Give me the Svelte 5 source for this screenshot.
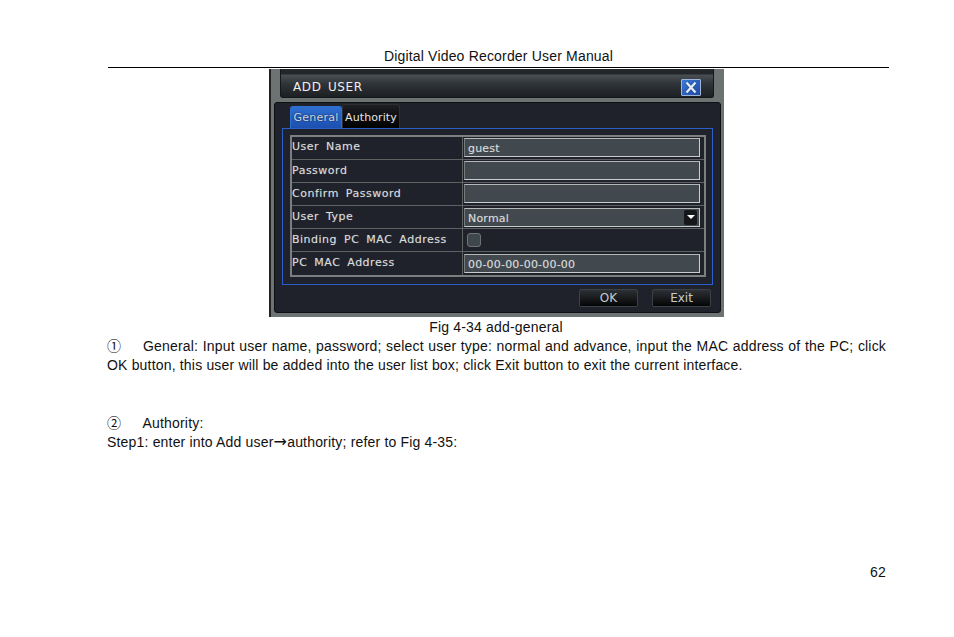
<script>
  const rows = [
    { label: 'User Name', kind: 'text', value: 'guest' },
    { label: 'Password', kind: 'text', value: '' },
    { label: 'Confirm Password', kind: 'text', value: '' },
    { label: 'User Type', kind: 'select', value: 'Normal' },
    { label: 'Binding PC MAC Address', kind: 'check', value: '' },
    { label: 'PC MAC Address', kind: 'text', value: '00-00-00-00-00-00' }
  ];
</script>

<div class="page">
  <header class="head">Digital Video Recorder User Manual</header>

  <figure class="shot">
    <div class="dialog">
      <div class="titlebar">
        <span class="title">ADD USER</span>
        <span class="close">
          <svg viewBox="0 0 18 15" width="18" height="15">
            <path d="M4.5 2.5 L13.5 12.5 M13.5 2.5 L4.5 12.5" stroke="#16387c" stroke-width="4" fill="none" opacity="0.5" />
            <path d="M4.5 2.5 L13.5 12.5 M13.5 2.5 L4.5 12.5" stroke="#e4eaf4" stroke-width="2.4" fill="none" />
          </svg>
        </span>
      </div>
      <div class="panel">
        <div class="tabs">
          <span class="tab active">General</span>
          <span class="tab">Authority</span>
        </div>
        <div class="frame">
          <div class="table">
            {#each rows as row}
              <div class="row">
                <div class="label">{row.label}</div>
                <div class="cell">
                  {#if row.kind === 'check'}
                    <span class="check"></span>
                  {:else}
                    <div class="input">
                      <span>{row.value}</span>
                      {#if row.kind === 'select'}
                        <span class="arrow"></span>
                      {/if}
                    </div>
                  {/if}
                </div>
              </div>
            {/each}
          </div>
        </div>
        <div class="buttons">
          <span class="btn">OK</span>
          <span class="btn">Exit</span>
        </div>
      </div>
    </div>
  </figure>

  <p class="caption">Fig 4-34 add-general</p>

  <p class="para">①&emsp;&ensp;General: Input user name, password; select user type: normal and advance, input the MAC address of the PC; click OK button, this user will be added into the user list box; click Exit button to exit the current interface.</p>

  <p class="para second">②&emsp;&ensp;Authority:</p>
  <p class="para">Step1: enter into Add user<span class="to">→</span>authority; refer to Fig 4-35:</p>

  <div class="pageno">62</div>
</div>

<style>
  :global(body) {
    margin: 0;
    background: #fff;
  }

  .page {
    width: 954px;
    height: 637px;
    box-sizing: border-box;
    padding: 47px 68px 0 107px;
    font-family: "Liberation Sans", "Noto Sans CJK SC", Arial, sans-serif;
    font-size: 14px;
    line-height: 19px;
    letter-spacing: 0.18px;
    color: #111;
  }

  .head {
    width: 781px;
    margin-left: 1px;
    height: 20px;
    text-align: center;
    border-bottom: 1px solid #000;
  }

  .shot {
    margin: 1px 0 0 162px;
    width: 455px;
    height: 248px;
    background: #6d7372;
    box-sizing: border-box;
    border-left: 2px solid #222;
  }

  .dialog {
    height: 100%;
    display: flex;
    flex-direction: column;
    font-family: "DejaVu Sans", sans-serif;
    font-size: 11px;
    letter-spacing: 0;
    color: #d8dcdc;
  }

  .titlebar {
    margin: 0 10px 0 9px;
    height: 29px;
    box-sizing: border-box;
    border: 1px solid #15171a;
    border-top: 0;
    border-radius: 0 0 3px 3px;
    background: linear-gradient(#23272b 0 5px, #4a4f53 6px, #2e3337 15px, #1d2023);
    display: flex;
    justify-content: space-between;
    padding: 8px 12px 0 12px;
  }

  .title {
    font-size: 12px;
    line-height: 20px;
    letter-spacing: 0.6px;
    word-spacing: 2px;
    color: #eee;
  }

  .close {
    width: 20px;
    height: 17px;
    display: block;
    border: 1px solid #9fb4d8;
    margin-top: 2px;
    background: linear-gradient(135deg, #3a78d8, #1c4aa0);
    box-sizing: border-box;
    overflow: hidden;
    border-radius: 1px;
  }

  .close svg {
    display: block;
  }

  .panel {
    margin: 4px 3px 4px 3px;
    flex: 1;
    background: #20222b;
    border: 1px solid #0f1013;
    border-radius: 3px;
    padding: 1px 7px 0 7px;
    box-sizing: border-box;
  }

  .tabs {
    display: flex;
    margin-left: 8px;
    height: 24px;
    align-items: flex-end;
  }

  .tab {
    width: 58px;
    height: 24px;
    box-sizing: border-box;
    text-align: center;
    line-height: 25px;
    background: linear-gradient(#1c1e22, #000);
    border: 1px solid #2c2e33;
    border-bottom: 0;
    border-radius: 3px 3px 0 0;
    letter-spacing: 0.1px;
    color: #e4e6e6;
  }

  .tab.active {
    width: 52px;
    height: 22px;
    line-height: 22px;
    letter-spacing: 0.25px;
    background: linear-gradient(#2f6fd0, #1c4fb0);
    border-color: #2f6fd0;
    color: #cfd6dc;
    text-shadow: 0 0 2px #0b1c40;
  }

  .frame {
    border: 1px solid #2a5fc8;
    height: 157px;
    box-sizing: border-box;
    padding: 6px 6px 0 7px;
  }

  .table {
    border: 2px solid #7c7f80;
    height: 142px;
    box-sizing: border-box;
    display: grid;
    grid-template-rows: repeat(6, 23px);
  }

  .row {
    display: grid;
    grid-template-columns: 171px 1fr;
    border-bottom: 1px solid #5f6263;
    box-sizing: border-box;
  }

  .row:last-child {
    border-bottom: 0;
  }

  .label {
    padding: 2px 0 0 0;
    line-height: 17px;
    letter-spacing: 0.5px;
    word-spacing: 3px;
    border-right: 1px solid #5f6263;
    white-space: nowrap;
    text-shadow: 0 0 1px rgba(255, 255, 255, 0.35);
  }

  .row:first-child .label {
    padding-top: 1px;
  }

  .cell {
    padding: 2px 4px 0 1px;
    display: flex;
    align-items: flex-start;
  }

  .row:nth-child(-n+3) .cell {
    padding-top: 1px;
  }

  .input {
    flex: 1;
    height: 19px;
    box-sizing: border-box;
    background: #41484e;
    border: 1px solid #c9cccc;
    border-left-color: #777b7c;
    border-top-color: #b5b8b8;
    padding: 1px 2px 0 3px;
    line-height: 19px;
    letter-spacing: 0.2px;
    display: flex;
    justify-content: space-between;
    align-items: center;
    text-shadow: 0 0 1px rgba(255, 255, 255, 0.3);
  }

  .check {
    width: 14px;
    height: 14px;
    margin: 2px 0 0 3px;
    box-sizing: border-box;
    background: #3f464c;
    border: 1px solid #6f7375;
    border-radius: 3px;
  }

  .arrow {
    width: 13px;
    height: 15px;
    margin-top: -1px;
    background: #15171b;
    border-radius: 2px;
    position: relative;
  }

  .arrow::after {
    content: '';
    position: absolute;
    left: 3px;
    top: 5px;
    border-style: solid;
    border-width: 4px 4px 0 4px;
    border-color: #fff transparent transparent transparent;
  }

  .buttons {
    display: flex;
    justify-content: flex-end;
    gap: 14px;
    padding: 4px 2px 0 0;
  }

  .btn {
    width: 59px;
    height: 18px;
    box-sizing: border-box;
    text-align: center;
    line-height: 17px;
    font-size: 12px;
    background: linear-gradient(#2d3034, #050506);
    border: 1px solid #3d4044;
    border-radius: 2px;
    color: #c8cbcb;
  }

  .caption {
    margin: 1px 0 0;
    text-align: center;
    width: 778px;
  }

  .para {
    margin: 0;
    width: 779px;
    text-align: justify;
    line-height: 19px;
  }

  .second {
    margin-top: 39px;
  }

  .to {
    font-family: "DejaVu Sans", sans-serif;
    font-size: 16px;
    line-height: 1;
  }

  .pageno {
    margin-top: 111px;
    width: 779px;
    text-align: right;
  }
</style>
